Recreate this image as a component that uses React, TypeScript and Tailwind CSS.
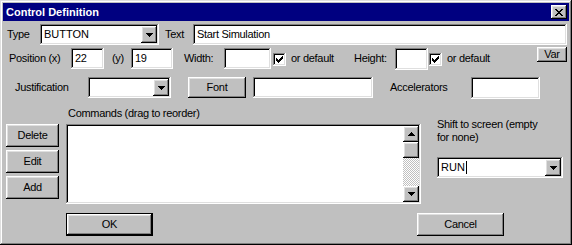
import React from 'react';

// Win95 bevels
const sunken =
  'bg-white shadow-[inset_-1px_-1px_#fff,inset_1px_1px_#808080,inset_-2px_-2px_#dfdfdf,inset_2px_2px_#000]';
const raised =
  'bg-[#c0c0c0] shadow-[inset_-1px_-1px_#000,inset_1px_1px_#fff,inset_-2px_-2px_#808080,inset_2px_2px_#dfdfdf]';

function DownArrow() {
  return (
    <svg width="7" height="4" viewBox="0 0 7 4" shapeRendering="crispEdges">
      <path d="M0 0h7v1h-7z M1 1h5v1h-5z M2 2h3v1h-3z M3 3h1v1h-1z" fill="#000" />
    </svg>
  );
}

function UpArrow() {
  return (
    <svg width="7" height="4" viewBox="0 0 7 4" shapeRendering="crispEdges">
      <path d="M3 0h1v1h-1z M2 1h3v1h-3z M1 2h5v1h-5z M0 3h7v1h-7z" fill="#000" />
    </svg>
  );
}

function CloseGlyph() {
  return (
    <svg width="8" height="7" viewBox="0 0 8 7" shapeRendering="crispEdges">
      <path
        d="M0 0h2v1h-2z M6 0h2v1h-2z M1 1h2v1h-2z M5 1h2v1h-2z M2 2h4v1h-4z M3 3h2v1h-2z M2 4h4v1h-4z M1 5h2v1h-2z M5 5h2v1h-2z M0 6h2v1h-2z M6 6h2v1h-2z"
        fill="#000"
      />
    </svg>
  );
}

function Check() {
  return (
    <svg width="7" height="7" viewBox="0 0 7 7" shapeRendering="crispEdges">
      <path
        d="M0 2h1v3h-1z M1 3h1v3h-1z M2 4h1v3h-1z M3 3h1v3h-1z M4 2h1v3h-1z M5 1h1v3h-1z M6 0h1v3h-1z"
        fill="#000"
      />
    </svg>
  );
}

function Checkbox({ className = '' }: { className?: string }) {
  return (
    <div className={`w-[13px] h-[13px] flex items-center justify-center ${sunken} ${className}`}>
      <Check />
    </div>
  );
}

function Field({ value = '', className = '' }: { value?: string; className?: string }) {
  return (
    <div className={`flex items-center pl-[4px] overflow-hidden whitespace-nowrap ${sunken} ${className}`}>
      {value}
    </div>
  );
}

function Combo({ value = '', className = '', cursor = false }: { value?: string; className?: string; cursor?: boolean }) {
  return (
    <div className={`flex items-stretch p-[2px] ${sunken} ${className}`}>
      <div className="flex-1 flex items-center pl-[2px] whitespace-nowrap overflow-hidden">
        {value}
        {cursor && <span className="w-px h-[13px] bg-black ml-px" />}
      </div>
      <div className={`w-[16px] flex items-center justify-center ${raised}`}>
        <DownArrow />
      </div>
    </div>
  );
}

function Button({ label, className = '' }: { label: string; className?: string }) {
  return (
    <div className={`flex items-center justify-center ${raised} ${className}`}>{label}</div>
  );
}

export default function App() {
  return (
    <div className="w-[572px] h-[245px] bg-[#c0c0c0] p-[3px] flex flex-col text-black text-[11px] leading-[13px] tracking-[-0.3px] font-['Liberation_Sans',Arial,sans-serif] shadow-[inset_-1px_-1px_#000,inset_1px_1px_#dfdfdf,inset_-2px_-2px_#808080,inset_2px_2px_#fff]">
      {/* Title bar */}
      <div className="h-[18px] bg-[#000080] flex items-center justify-between pl-[3px] pr-[2px]">
        <span className="text-white font-bold tracking-normal">Control Definition</span>
        <div className={`w-[16px] h-[14px] flex items-center justify-center ${raised}`}>
          <CloseGlyph />
        </div>
      </div>

      {/* Type / Text */}
      <div className="mt-[3px] flex items-center h-[21px]">
        <span className="w-[37px] pl-[4px]">Type</span>
        <Combo value="BUTTON" className="w-[119px] h-[21px] tracking-normal" />
        <span className="ml-[6px] w-[28px]">Text</span>
        <Field value="Start Simulation" className="w-[374px] h-[21px]" />
      </div>

      {/* Position / size */}
      <div className="mt-[2px] flex items-start h-[23px]">
        <span className="w-[68px] pl-[6px] h-[21px] mt-[1px] flex items-center">Position (x)</span>
        <Field value="22" className="w-[33px] h-[21px] mt-[1px]" />
        <span className="ml-[8px] w-[19px] h-[21px] mt-[1px] flex items-center">(y)</span>
        <Field value="19" className="w-[42px] h-[21px] mt-[1px]" />
        <span className="ml-[11px] w-[40px] h-[21px] mt-[1px] flex items-center">Width:</span>
        <Field className="w-[47px] h-[21px] mt-[1px]" />
        <Checkbox className="ml-[2px] mt-[6px]" />
        <span className="ml-[5px] w-[63px] h-[21px] mt-[1px] flex items-center">or default</span>
        <span className="w-[41px] h-[21px] mt-[1px] flex items-center">Height:</span>
        <Field className="w-[33px] h-[22px] mt-[1px]" />
        <Checkbox className="ml-[1px] mt-[6px]" />
        <span className="ml-[5px] flex-1 h-[21px] mt-[1px] flex items-center">or default</span>
        <Button label="Var" className="w-[30px] h-[15px] mr-[2px]" />
      </div>

      {/* Justification / font / accelerators */}
      <div className="mt-[7px] flex items-start">
        <span className="w-[85px] pl-[12px] h-[21px] flex items-center">Justification</span>
        <Combo className="w-[83px] h-[21px]" />
        <Button label="Font" className="ml-[17px] w-[58px] h-[21px]" />
        <Field className="ml-[7px] w-[120px] h-[21px]" />
        <span className="ml-[17px] w-[81px] h-[21px] flex items-center">Accelerators</span>
        <Field className="w-[69px] h-[22px]" />
      </div>

      <div className="mt-[8px] h-[13px] pl-[65px]">Commands (drag to reorder)</div>

      {/* Commands list */}
      <div className="mt-[4px] flex items-start">
        <div className="pl-[3px] w-[56px] flex flex-col gap-[3px]">
          <Button label="Delete" className="w-[53px] h-[23px]" />
          <Button label="Edit" className="w-[53px] h-[23px]" />
          <Button label="Add" className="w-[53px] h-[23px]" />
        </div>
        <div className={`ml-[7px] w-[355px] h-[80px] p-[2px] flex justify-end ${sunken}`}>
          <div className="w-[16px] flex flex-col">
            <div className={`h-[16px] flex items-center justify-center ${raised}`}>
              <UpArrow />
            </div>
            <div className={`h-[16px] ${raised}`} />
            <div className="flex-1 bg-[image:repeating-conic-gradient(#c0c0c0_0_25%,#ffffff_0_50%)] bg-[length:2px_2px]" />
            <div className={`h-[16px] flex items-center justify-center ${raised}`}>
              <DownArrow />
            </div>
          </div>
        </div>
        <div className="ml-[16px] flex flex-col">
          <div className="-mt-[6px] leading-[13px]">
            Shift to screen (empty
            <br />
            for none)
          </div>
          <Combo value="RUN" cursor className="mt-[13px] w-[126px] h-[21px] tracking-normal" />
        </div>
      </div>

      {/* OK / Cancel */}
      <div className="mt-[9px] flex">
        <div className="ml-[63px] w-[87px] h-[23px] border border-black">
          <Button label="OK" className="w-full h-full" />
        </div>
        <Button label="Cancel" className="ml-[264px] w-[87px] h-[23px]" />
      </div>
    </div>
  );
}
